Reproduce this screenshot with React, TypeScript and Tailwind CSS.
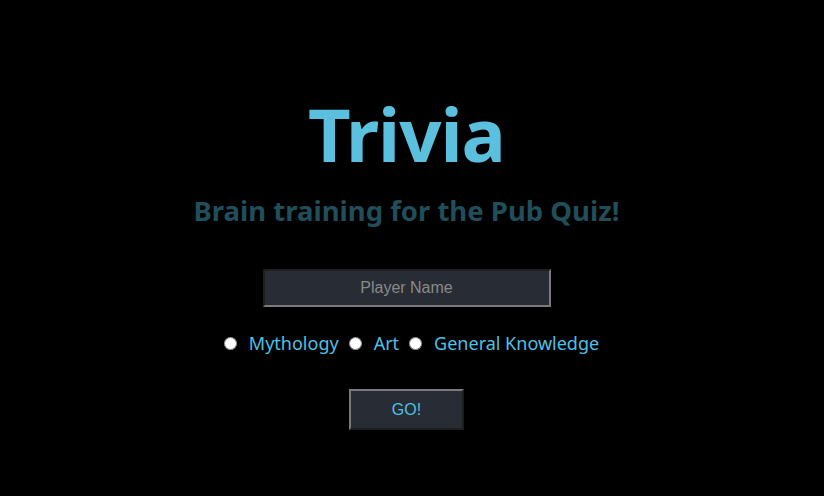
const App = () => {
  return (
    <div className="flex min-h-[496px] flex-col items-center bg-black pr-[11px] pt-[89px] font-['Noto_Sans',sans-serif]">
      <h1 className="text-[74px] font-bold leading-[90px] tracking-[-1px] text-[#5bc0de]">Trivia</h1>
      <h2 className="mt-[12px] text-[27.5px] font-bold leading-[40px] text-[#214e5b]">
        Brain training for the Pub Quiz!
      </h2>

      <input
        type="text"
        placeholder="Player Name"
        className="mt-[38px] h-[38px] w-[288px] border-2 border-t-[#1e1e1e] border-l-[#1e1e1e] border-r-[#7a7a7a] border-b-[#7a7a7a] bg-[#282c34] text-center font-['Liberation_Sans',sans-serif] text-base text-[#cccccc] placeholder:text-[#8a8a8a] outline-none"
      />

      <div className="ml-[5px] mt-[24px] flex items-center text-[18px] leading-[25px] text-[#4fc0e6]">
        <label className="flex items-center">
          <input type="radio" name="cat" className="mx-[5px] h-[13px] w-[13px]" />
          <span className="ml-[7px]">Mythology</span>
        </label>
        <label className="ml-[5px] flex items-center">
          <input type="radio" name="cat" className="mx-[5px] h-[13px] w-[13px]" />
          <span className="ml-[7px]">Art</span>
        </label>
        <label className="ml-[5px] flex items-center">
          <input type="radio" name="cat" className="mx-[5px] h-[13px] w-[13px]" />
          <span className="ml-[7px]">General Knowledge</span>
        </label>
      </div>

      <button className="mt-[33px] h-[41px] w-[115px] border-2 border-t-[#7a7a7a] border-l-[#7a7a7a] border-r-[#1e1e1e] border-b-[#1e1e1e] bg-[#282c34] font-['Liberation_Sans',sans-serif] text-base text-[#4fc0e6]">
        GO!
      </button>
    </div>
  )
}

export default App
